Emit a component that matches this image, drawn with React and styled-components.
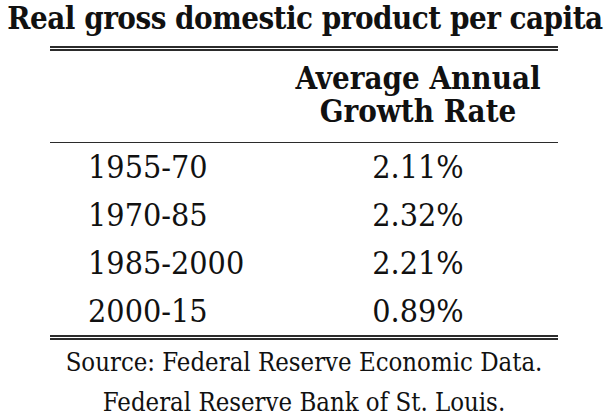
import React from "react";
import styled, { createGlobalStyle } from "styled-components";

const Global = createGlobalStyle`
  html, body { margin: 0; padding: 0; background: #ffffff; }
  body { font-family: "DejaVu Serif Condensed", "DejaVu Serif", serif; font-stretch: condensed; color: #111; }
`;

const Page = styled.div`
  width: 610px;
  height: 418px;
  overflow: hidden;
  display: flex;
  flex-direction: column;
  align-items: stretch;
`;

const Title = styled.h1`
  margin: 0;
  font-size: 31px;
  font-weight: bold;
  line-height: 36px;
  text-align: center;
  white-space: nowrap;
  letter-spacing: -0.5px;
`;

const Table = styled.div`
  margin: 10px 0 0 50px;
  width: 508px;
  display: grid;
  grid-template-columns: 228px 280px;
`;

const DoubleRule = styled.div`
  grid-column: 1 / -1;
  height: 1px;
  border-top: 2px solid #2b2b2b;
  border-bottom: 2px solid #2b2b2b;
`;

const HeadCell = styled.div`
  padding: 11px 0 14px;
  border-bottom: 1.5px solid #2b2b2b;
  font-size: 31px;
  font-weight: bold;
  line-height: 33px;
  text-align: center;
`;

const Cell = styled.div`
  font-size: 32px;
  line-height: 48px;
  padding-left: ${(p) => (p.$first ? "38px" : "0")};
  text-align: ${(p) => (p.$first ? "left" : "center")};
`;

const Source = styled.p`
  margin: 2px 0 0;
  font-size: 25.5px;
  line-height: 40px;
  text-align: center;
  padding-right: 2px;
`;

const rows = [
  ["1955-70", "2.11%"],
  ["1970-85", "2.32%"],
  ["1985-2000", "2.21%"],
  ["2000-15", "0.89%"],
];

export default function App() {
  return (
    <>
      <Global />
      <Page>
        <Title>Real gross domestic product per capita</Title>
        <Table>
          <DoubleRule />
          <HeadCell />
          <HeadCell>
            Average Annual
            <br />
            Growth Rate
          </HeadCell>
          {rows.map(([period, rate]) => (
            <React.Fragment key={period}>
              <Cell $first>{period}</Cell>
              <Cell>{rate}</Cell>
            </React.Fragment>
          ))}
          <DoubleRule />
        </Table>
        <Source>
          Source: Federal Reserve Economic Data.
          <br />
          Federal Reserve Bank of St. Louis.
        </Source>
      </Page>
    </>
  );
}
